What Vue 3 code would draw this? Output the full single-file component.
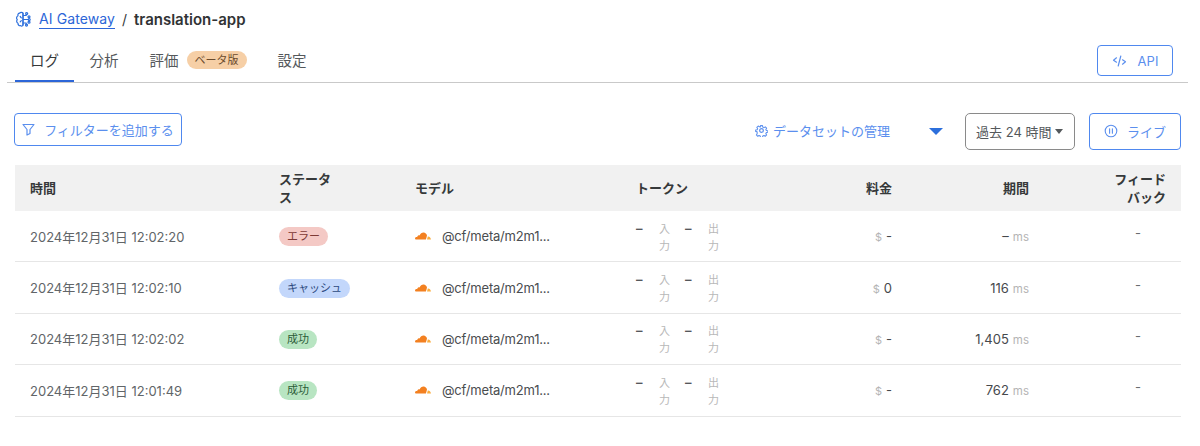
<script setup>
const rows = [
  { time: '2024年12月31日 12:02:20', status: 'エラー', kind: 'err', cost: '-', dur: '–' },
  { time: '2024年12月31日 12:02:10', status: 'キャッシュ', kind: 'cache', cost: '0', dur: '116' },
  { time: '2024年12月31日 12:02:02', status: '成功', kind: 'ok', cost: '-', dur: '1,405' },
  { time: '2024年12月31日 12:01:49', status: '成功', kind: 'ok', cost: '-', dur: '762' },
]
</script>

<template>
  <div class="page">
    <div class="crumbs">
      <svg class="brain" width="17" height="17" viewBox="0 0 17 17" fill="none" stroke="currentColor" stroke-width="1.2" stroke-linecap="round" stroke-linejoin="round">
        <path d="M8 2.2C7.4 1.2 5.4 1 4.6 2.2 3.2 2.2 2.6 3.6 3 4.7 1.4 5.4 1.1 7.6 2.3 8.6 1.2 9.8 1.6 11.800 3 12.300 2.800 13.900 4.300 15.200 5.600 14.600 6.500 15.500 8 15.100 8 13.900Z" />
        <path d="M8 2.200V13.900M8 4.500H11.200M11.200 4.500V3.400M8 8.500H13M8 12H11.200V13.200M5.200 5.500 6.300 6.800M5.200 10.800 6.300 9.600" />
        <circle cx="11.700" cy="2.500" r="1" />
        <circle cx="14" cy="5.800" r="1" />
        <circle cx="14.200" cy="8.500" r="1" />
        <circle cx="14" cy="11.200" r="1" />
        <circle cx="11.500" cy="14.100" r="1" />
      </svg>
      <a class="gw">AI Gateway</a>
      <span class="slash">/</span>
      <strong class="app">translation-app</strong>
    </div>

    <div class="tabbar">
      <div class="tabs">
        <div class="tab active">ログ</div>
        <div class="tab">分析</div>
        <div class="tab">評価<span class="beta">ベータ版</span></div>
        <div class="tab">設定</div>
      </div>
      <button class="btn api">
        <svg width="15" height="14" viewBox="0 0 14 14" fill="none" stroke="currentColor" stroke-width="1.200" stroke-linecap="round" stroke-linejoin="round">
          <path d="M4 3.800 1 6.200 4 8.200M10 5.800 13 7.800 10 10.200M8.300 2 5.700 12" />
        </svg>
        <span>API</span>
      </button>
    </div>

    <div class="toolbar">
      <button class="btn filter">
        <svg width="13" height="13" viewBox="0 0 13 13" fill="none" stroke="currentColor" stroke-width="1.200" stroke-linejoin="round">
          <path d="M1 1.500H12L8 6.500V10.500L5 12V6.500Z" />
        </svg>
        <span>フィルターを追加する</span>
      </button>
      <div class="tools">
        <div class="dataset">
          <svg width="13" height="13" viewBox="0 0 24 24" fill="none" stroke="currentColor" stroke-width="2.200" stroke-linejoin="round">
            <circle cx="12" cy="12" r="3.400" />
            <path d="M10 2h4l.6 3 2.500 1.100 2.600-1.600 2.800 2.800-1.600 2.600 1.100 2.100 3 .6v2.800l-3 .6-1.100 2.500 1.600 2.600-2.800 2.800-2.600-1.600-2.500 1.100-.6 3h-4l-.6-3-2.500-1.100-2.600 1.600-2.800-2.800 1.600-2.600L3 14.400l-3-.6V11l3-.6 1.100-2.100L2.500 5.700l2.800-2.800 2.600 1.600L9.400 5Z" transform="translate(1.200 1.200) scale(.9)" />
          </svg>
          <span>データセットの管理</span>
        </div>
        <span class="tri blue"></span>
        <button class="select">過去 24 時間<span class="tri dark"></span></button>
        <button class="btn live">
          <svg width="14" height="14" viewBox="0 0 14 14" fill="none" stroke="currentColor" stroke-width="1.100" stroke-linecap="round">
            <circle cx="7" cy="7" r="5.800" />
            <path d="M5.600 4.800V9.200M8.400 4.800V9.200" />
          </svg>
          <span>ライブ</span>
        </button>
      </div>
    </div>

    <div class="table">
      <div class="row head">
        <div class="cell">時間</div>
        <div class="cell narrow">ステータス</div>
        <div class="cell">モデル</div>
        <div class="cell">トークン</div>
        <div class="cell right">料金</div>
        <div class="cell right">期間</div>
        <div class="cell right fb">フィードバック</div>
      </div>
      <div v-for="r in rows" :key="r.time" class="row body">
        <div class="cell time">{{ r.time }}</div>
        <div class="cell pillcell"><span class="pill" :class="r.kind">{{ r.status }}</span></div>
        <div class="cell model">
          <svg width="16" height="8" viewBox="0 0 16 8" class="cloud">
            <path fill="#f38020" d="M10.900 7.600H1.200C.5 7.600 0 7.100 0 6.600 0 5.700.7 5.100 1.500 5.100c.2 0 .4 0 .6.100C2.500 3.900 3.500 3.200 4.600 3.400 5.300 1.500 7 .3 8.600.4 10.300.5 11.600 1.700 12 3.400 11.600 4.800 11.400 6.200 10.900 7.600Z" />
            <path fill="#faad3f" d="M12 7.600c.3-1 .5-2 .8-3 1.500-.2 2.800.9 3.200 3Z" />
          </svg>
          <span>@cf/meta/m2m1...</span>
        </div>
        <div class="cell tokens">
          <span class="dash">–</span><span class="unit">入力</span>
          <span class="dash">–</span><span class="unit">出力</span>
        </div>
        <div class="cell right num"><span class="dim dollar">$</span><span>{{ r.cost }}</span></div>
        <div class="cell right num"><span>{{ r.dur }}</span><span class="dim ms">ms</span></div>
        <div class="cell right fbv">-</div>
      </div>
    </div>
  </div>
</template>

<style>
html, body { margin: 0; background: #fff; }
</style>

<style scoped>
.page {
  width: 1200px;
  height: 446px;
  overflow: hidden;
  box-sizing: border-box;
  padding: 0 12px 0 7px;
  font-family: Inter, "Noto Sans CJK JP", sans-serif;
  font-size: 13px;
  color: #36393a;
  background: #fff;
}
.crumbs {
  display: flex;
  align-items: center;
  height: 40px;
  padding: 0 0 2px 8px;
  box-sizing: border-box;
  font-size: 14px;
}
.brain { color: #2c6fdc; margin-right: 7px; }
.gw { color: #2c66d8; border-bottom: 1px solid #2c66d8; line-height: 18px; letter-spacing: 0.1px; }
.slash { margin: 0 7px; color: #36393a; }
.app { font-weight: 600; font-size: 15px; color: #313335; }

.tabbar {
  display: flex;
  align-items: flex-start;
  justify-content: space-between;
  height: 43px;
  box-sizing: border-box;
  border-bottom: 1px solid #c9c9c9;
  padding-left: 8px;
}
.tabs { display: flex; }
.tab {
  display: flex;
  align-items: center;
  height: 42px;
  padding: 0 15.500px 4px;
  font-size: 14.500px;
  color: #54585b;
  box-sizing: border-box;
}
.tab.active { color: #36393a; border-bottom: 2px solid #2c66d8; padding: 0 15px 2px; }
.beta {
  margin-left: 8px;
  height: 18px;
  line-height: 18px;
  padding: 0 8px;
  border-radius: 9px;
  background: #f6cfa6;
  color: #6b4b2c;
  font-size: 11px;
  margin-top: 2px;
}
button { font-family: inherit; cursor: pointer; background: #fff; }
.btn {
  display: flex;
  align-items: center;
  justify-content: center;
  box-sizing: border-box;
  border: 1px solid #4f88ef;
  border-radius: 4px;
  color: #5b8fee;
  font-size: 13px;
  padding: 0;
}
.api { width: 76px; height: 31px; gap: 11px; margin: 5px 15px 0 0; }
.toolbar {
  display: flex;
  align-items: center;
  justify-content: space-between;
  height: 36px;
  margin-top: 30px;
  padding: 0 7px 0 7px;
}
.filter { width: 168px; height: 33px; gap: 9px; margin-top: -3px; }
.tools { display: flex; align-items: center; }
.dataset { display: flex; align-items: center; gap: 5px; color: #5b8fee; font-size: 13px; margin-top: -1px; }
.tri {
  display: inline-block;
  width: 0;
  height: 0;
  border-left: 7px solid transparent;
  border-right: 7px solid transparent;
}
.tri.blue { border-top: 7px solid #2c6fdc; margin: 0 22px 0 39px; }
.select {
  display: flex;
  align-items: center;
  width: 110px;
  height: 37px;
  padding: 0 0 0 10px;
  box-sizing: border-box;
  border: 1px solid #8a8a8a;
  border-radius: 5px;
  color: #54585b;
  font-size: 13px;
}
.tri.dark {
  border-left-width: 4.500px;
  border-right-width: 4.500px;
  border-top: 5px solid #54585b;
  margin-left: 4px;
}
.live { width: 92px; height: 37px; gap: 9px; margin-left: 14px; }

.table { margin-top: 16px; margin-left: 8px; width: 1166px; }
.row {
  display: grid;
  grid-template-columns: 249px 136px 221px 149px 137px 137px 137px;
  align-items: center;
}
.head {
  height: 46px;
  background: #f1f1f1;
  font-weight: 600;
  line-height: 18px;
  color: #36393a;
}
.body {
  height: 51.400px;
  border-bottom: 1px solid #e6e6e6;
  box-sizing: border-box;
}
.cell { padding: 0 15px; min-width: 0; }
.narrow { width: 60px; box-sizing: content-box; word-break: break-all; }
.right { text-align: right; justify-content: flex-end; }
.fb { padding-left: 60px; }
.time { color: #616568; }
.pillcell { display: flex; align-items: center; margin-top: 1px; }
.pill {
  display: inline-block;
  height: 19px;
  line-height: 19px;
  padding: 0 8px;
  border-radius: 10px;
  font-size: 11px;
}
.err { background: #f4c9c5; color: #7d3a35; }
.cache { background: #c3d7fb; color: #2d4a80; }
.ok { background: #b8e5c2; color: #2c5c38; }
.model { display: flex; align-items: center; gap: 11px; color: #4a4d50; letter-spacing: -0.2px; }
.tokens {
  display: flex;
  align-items: flex-start;
  font-size: 11px;
  line-height: 17px;
  color: #55585b;
  padding-top: 3px;
}
.dash { width: 23px; font-size: 13px; font-weight: 600; line-height: 15px; }
.unit { width: 11px; color: #b8b8b8; word-break: break-all; margin-right: 15px; }
.num { display: flex; align-items: baseline; color: #46494c; gap: 4px; }
.dim { color: #b4b4b4; font-size: 11px; }
.ms { font-size: 11.500px; margin-left: 0; }
.fbv { color: #6a6d70; margin-top: -6px; padding-right: 40px; }
</style>
